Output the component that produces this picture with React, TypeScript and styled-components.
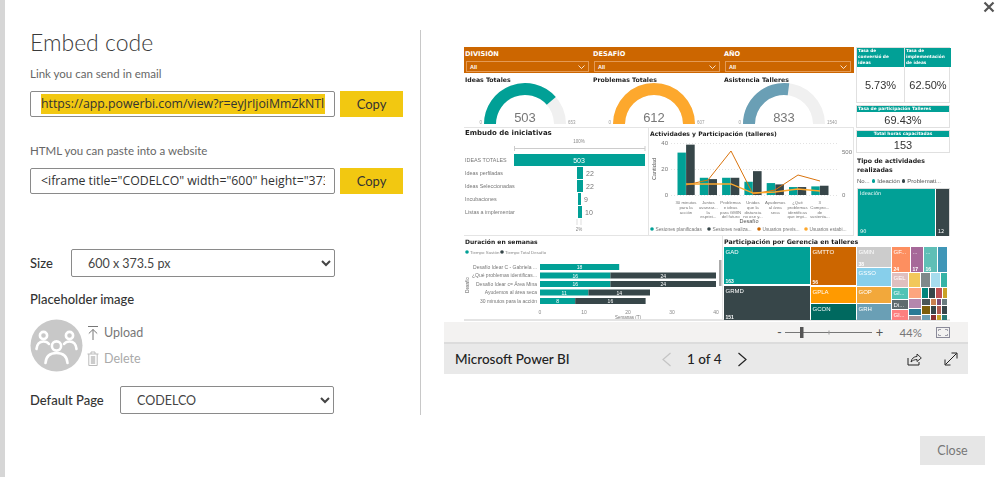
import React from 'react';
import styled, { createGlobalStyle } from 'styled-components';

const COLORS = {
  teal: '#01a096',
  dark: '#374649',
  orange: '#cc6600',
  amber: '#fda82d',
  steel: '#6a9fb5',
  yellow: '#f2c811',
};

const GlobalStyle = createGlobalStyle`
  html, body {
    margin: 0;
    padding: 0;
    background: #fff;
    font-family: "Lato", "Open Sans", sans-serif;
    color: #333;
  }
  * { box-sizing: border-box; }
  svg { display: block; }
  svg text { font-family: "Liberation Sans", sans-serif; }
`;

const Page = styled.div`
  position: relative;
  width: 999px;
  height: 477px;
  overflow: hidden;
  display: flex;
  background: #fff;
  border-left: 5px solid #d6d6d6;
`;

const CloseX = styled.button`
  position: absolute;
  top: 1px;
  right: 4px;
  border: 0;
  padding: 0;
  background: none;
`;

const LeftPanel = styled.section`
  width: 416px;
  height: 385px;
  margin-top: 30px;
  padding-left: 25px;
  border-right: 1px solid #c8c8c8;
`;

const Title = styled.h1`
  margin: 0;
  font-size: 23px;
  line-height: 24px;
  font-weight: 300;
  color: #3a3a3a;
`;

const FieldLabel = styled.div<{ $top: number }>`
  margin-top: ${(p) => p.$top}px;
  font-size: 11.5px;
  line-height: 14px;
  color: #666;
`;

const FieldRow = styled.div`
  display: flex;
  gap: 5px;
  margin-top: 10px;
`;

const CodeField = styled.div`
  width: 305px;
  height: 26px;
  padding: 2px 9px 0 10px;
  border: 1px solid #8a8a8a;
  border-radius: 2px;
  overflow: hidden;
  white-space: nowrap;
  font: 500 12.3px/20px "Open Sans", sans-serif;
  color: #333;
`;

const Highlight = styled.span`
  display: block;
  overflow: hidden;
  background: ${COLORS.yellow};
`;

const CodeClip = styled.span`
  display: block;
  overflow: hidden;
`;

const CopyButton = styled.button`
  width: 63px;
  height: 26px;
  border: 0;
  padding: 0;
  background: ${COLORS.yellow};
  font: 400 13px "Lato", sans-serif;
  color: #333;
`;

const InlineRow = styled.div<{ $top: number }>`
  display: flex;
  align-items: center;
  margin-top: ${(p) => p.$top}px;
`;

const InlineLabel = styled.label<{ $width: number }>`
  width: ${(p) => p.$width}px;
  font-size: 13px;
  font-weight: 500;
  color: #333;
`;

const Select = styled.select<{ $width: number }>`
  width: ${(p) => p.$width}px;
  height: 28px;
  padding-left: 12px;
  border: 1px solid #8a8a8a;
  border-radius: 2px;
  background: #fff;
  font: 400 12.5px "Lato", sans-serif;
  color: #444;
`;

const SubHead = styled.div`
  margin-top: 14px;
  font-size: 13px;
  line-height: 17px;
  font-weight: 500;
  color: #333;
`;

const PlaceholderRow = styled.div`
  display: flex;
  gap: 4px;
  margin-top: 11px;
`;

const Actions = styled.div`
  display: flex;
  flex-direction: column;
  gap: 9px;
  padding-top: 5px;
`;

const ActionLink = styled.span<{ $muted?: boolean }>`
  display: flex;
  align-items: center;
  gap: 5px;
  height: 17px;
  font-size: 12.5px;
  color: ${(p) => (p.$muted ? '#aaa' : '#777')};
`;

const RightPanel = styled.section`
  display: flex;
  flex-direction: column;
  margin-left: 23px;
  padding-top: 47px;
  width: 524px;
`;

const Report = styled.div`
  display: flex;
  flex-direction: column;
  width: 486px;
  margin-left: 20px;
  filter: blur(0.3px);
`;

const TopArea = styled.div`
  display: flex;
  gap: 2px;
  height: 189px;
`;

const MainColumn = styled.div`
  width: 390px;
  display: flex;
  flex-direction: column;
`;

const SlicerBand = styled.div`
  display: grid;
  grid-template-columns: 128px 131px 131px;
  height: 26px;
  background: ${COLORS.orange};
  color: #fff;
`;

const Slicer = styled.div`
  padding: 1px 3px 0 1px;
`;

const SlicerName = styled.div`
  font: 700 6.6px/12px "DejaVu Sans", sans-serif;
`;

const SlicerBox = styled.div`
  display: flex;
  justify-content: space-between;
  align-items: center;
  height: 11px;
  margin: 1px 0 0 1px;
  padding: 0 3px;
  border: 1px solid #e49a55;
  font: 700 5.5px "Liberation Sans", sans-serif;
`;

const GaugeRow = styled.div`
  display: grid;
  grid-template-columns: 128px 131px 131px;
  height: 54px;
`;

const GaugeTile = styled.div`
  position: relative;
`;

const TileTitle = styled.div<{ $size?: number }>`
  font: 700 ${(p) => p.$size ?? 7}px/9px "DejaVu Sans", sans-serif;
  color: #1c1c1c;
  white-space: nowrap;
`;

const GaugeTitle = styled(TileTitle)`
  position: absolute;
  top: 2px;
  left: 1px;
`;

const ChartRow = styled.div`
  display: grid;
  grid-template-columns: 185px 205px;
  height: 109px;
`;

const ChartTile = styled.div`
  border-top: 1px solid #e4e4e4;
  border-right: 1px solid #e4e4e4;
  border-bottom: 1px solid #e4e4e4;
`;

const SideColumn = styled.div`
  width: 94px;
  display: flex;
  flex-direction: column;
  gap: 2px;
`;

const KpiPair = styled.div`
  display: grid;
  grid-template-columns: 47px 47px;
  height: 56px;
  border: 1px solid #e0e0e0;
`;

const KpiCell = styled.div`
  display: flex;
  flex-direction: column;
  & + & {
    border-left: 1px solid #e0e0e0;
  }
`;

const KpiHead = styled.div`
  height: 19px;
  padding: 0 1px;
  background: ${COLORS.teal};
  color: #fff;
  font: 700 4.3px/6.2px "DejaVu Sans", sans-serif;
`;

const KpiValue = styled.div`
  flex: 1;
  display: flex;
  align-items: center;
  justify-content: center;
  font: 400 11px "Liberation Sans", sans-serif;
  color: #333;
`;

const KpiBand = styled.div`
  display: flex;
  flex-direction: column;
  height: 23px;
  border: 1px solid #e0e0e0;
`;

const BandHead = styled.div<{ $center?: boolean }>`
  height: 6px;
  padding: 0 1px;
  background: ${COLORS.teal};
  color: #fff;
  text-align: ${(p) => (p.$center ? 'center' : 'left')};
  font: 700 4.4px/6px "DejaVu Sans", sans-serif;
  white-space: nowrap;
`;

const ActivityTile = styled.div`
  flex: 1;
  padding: 1px 0 0 1px;
`;

const ActivityTitle = styled(TileTitle)`
  white-space: normal;
  font-size: 6.2px;
`;

const LegendLine = styled.div`
  display: flex;
  align-items: center;
  gap: 2px;
  margin-top: 3px;
  font: 400 6px/8px "Liberation Sans", sans-serif;
  color: #555;
  white-space: nowrap;
`;

const Dot = styled.i<{ $color: string }>`
  width: 3.5px;
  height: 3.5px;
  border-radius: 50%;
  background: ${(p) => p.$color};
`;

const ActivityBlocks = styled.div`
  display: flex;
  gap: 1px;
  height: 48px;
  margin-top: 3px;
  border: 1px solid #ddd;
  border-width: 1px 1px 0;
`;

const ActivityBlock = styled.div<{ $color: string; $grow: number }>`
  flex: ${(p) => p.$grow};
  display: flex;
  flex-direction: column;
  justify-content: space-between;
  padding: 1px 2px;
  background: ${(p) => p.$color};
  color: #fff;
  font: 400 5px/7px "DejaVu Sans", sans-serif;
`;

const BottomArea = styled.div`
  display: grid;
  grid-template-columns: 259px 227px;
  height: 85px;
  border-bottom: 2px solid #e4e4e4;
`;

const BottomTile = styled.div`
  border-right: 1px solid #e4e4e4;
`;

const ZoomBar = styled.div`
  display: flex;
  align-items: center;
  justify-content: flex-end;
  height: 20px;
  margin-top: 1px;
  padding-right: 18px;
  background: #f3f2f1;
  border-bottom: 0;
`;

const ZoomSign = styled.span`
  width: 12px;
  text-align: center;
  font-size: 13px;
  color: #555;
`;

const ZoomValue = styled.span`
  margin: 0 14px 0 14px;
  font-size: 11.5px;
  color: #777;
`;

const FooterBar = styled.div`
  display: grid;
  grid-template-columns: 206px 1fr auto;
  align-items: center;
  height: 32px;
  padding: 0 10px 0 11px;
  background: #e9e9e9;
  border-top: 2px solid #dcdcdc;
`;

const Brand = styled.span`
  font-size: 13.5px;
  font-weight: 500;
  color: #222;
`;

const Pager = styled.div`
  display: flex;
  align-items: center;
  gap: 15px;
  font-size: 13.5px;
  font-weight: 500;
  color: #222;
`;

const FooterIcons = styled.div`
  display: flex;
  gap: 22px;
`;

const CloseButton = styled.button`
  position: absolute;
  right: 14px;
  bottom: 12px;
  width: 65px;
  height: 29px;
  border: 0;
  padding: 0;
  background: #e6e6e6;
  font: 400 12.5px "Lato", sans-serif;
  color: #777;
`;

const arc = (cx: number, cy: number, R: number, r: number, frac: number) => {
  const a = Math.PI * (1 - Math.min(frac, 1));
  const x1 = cx + R * Math.cos(a);
  const y1 = cy - R * Math.sin(a);
  const x2 = cx + r * Math.cos(a);
  const y2 = cy - r * Math.sin(a);
  return `M${cx - R} ${cy}A${R} ${R} 0 0 1 ${x1} ${y1}L${x2} ${y2}A${r} ${r} 0 0 0 ${cx - r} ${cy}Z`;
};

const gauges = [
  { title: 'Ideas Totales', value: 503, max: 653, color: COLORS.teal, cx: 61 },
  { title: 'Problemas Totales', value: 612, max: 607, color: COLORS.amber, cx: 62 },
  { title: 'Asistencia Talleres', value: 833, max: 1540, color: COLORS.steel, cx: 61 },
];

const Gauge = ({ title, value, max, color, cx }: (typeof gauges)[number]) => (
  <GaugeTile>
    <GaugeTitle $size={6.2}>{title}</GaugeTitle>
    <svg width="128" height="54" style={{ overflow: 'visible' }}>
      <path d={arc(cx, 51, 41, 29, 1)} fill="#f0f0f0" />
      <path d={arc(cx, 51, 41, 29, value / max)} fill={color} />
      <text x={cx} y={49} textAnchor="middle" fontSize="13" fill="#777">{value}</text>
      <text x={cx - 43} y={51} textAnchor="end" fontSize="4.5" fill="#999">0</text>
      <text x={cx + 43} y={51} fontSize="4.5" fill="#999">{max}</text>
    </svg>
  </GaugeTile>
);

const funnelRows = [
  { label: 'IDEAS TOTALES', value: 503, x: 50, w: 131 },
  { label: 'Ideas perfiladas', value: 22, x: 113, w: 6 },
  { label: 'Ideas Seleccionadas', value: 22, x: 113, w: 6 },
  { label: 'Incubaciones', value: 9, x: 114, w: 3 },
  { label: 'Listas a implementar', value: 10, x: 114, w: 4 },
];

const FunnelChart = () => (
  <svg width="184" height="107">
    <foreignObject x="1" y="1" width="150" height="10">
      <TileTitle>Embudo de iniciativas</TileTitle>
    </foreignObject>
    <text x="115" y="15" textAnchor="middle" fontSize="4.5" fill="#888">100%</text>
    <path d="M50.5 18v5M50.5 20.5H181M181 18v5" stroke="#ccc" fill="none" />
    {funnelRows.map((row, i) => (
      <g key={row.label}>
        <text x="1" y={33.5 + i * 13} fontSize="5.4" fill="#777">{row.label}</text>
        <rect x={row.x} y={26 + i * 13} width={row.w} height="12" fill={COLORS.teal} />
        {i === 0 ? (
          <text x="115" y="34.5" textAnchor="middle" fontSize="7" fill="#fff">{row.value}</text>
        ) : (
          <text x={row.x + row.w + 3} y={34.5 + i * 13} fontSize="7" fill="#777">{row.value}</text>
        )}
      </g>
    ))}
    <path d="M113 91v6M117 91v6" stroke="#ddd" fill="none" />
    <text x="115" y="103" textAnchor="middle" fontSize="4.5" fill="#888">2%</text>
  </svg>
);

const activityGroups = [
  { teal: 32, dark: 38, label: ['30 minutos', 'para la', 'acción'] },
  { teal: 13, dark: 12, label: ['Juntos', 'avanzar...', 'la', 'espriei...'] },
  { teal: 13, dark: 13, label: ['Problemas', 'e ideas', 'para GMIN', 'del futuro'] },
  { teal: 10, dark: 18, label: ['Unidos', 'que la', 'distancia', 'no ose y...'] },
  { teal: 9, dark: 8, label: ['Ayudemos', 'al área', 'seca'] },
  { teal: 6, dark: 6, label: ['¿Qué', 'problemas', 'identificas', 'que impi...'] },
  { teal: 6.5, dark: 7, label: ['3', 'Compro...', 'de', 'sustenta...'] },
];

const plannedLine = [[37, 42], [59, 37], [82, 8], [104, 51], [126, 47], [149, 32], [171, 38]];
const attendedLine = [[37, 41], [59, 41], [82, 41], [104, 50], [126, 49], [149, 46], [171, 48]];
const toPoints = (line: number[][]) => line.map(([x, y]) => `${x},${y + 15}`).join(' ');

const activityLegend = [
  { x: 3, color: COLORS.teal, text: 'Sesiones planificadas' },
  { x: 60, color: COLORS.dark, text: 'Sesiones realiza...' },
  { x: 110, color: COLORS.orange, text: 'Usuarios previs...' },
  { x: 157, color: COLORS.amber, text: 'Usuarios estabi...' },
];

const ActivityChart = () => (
  <svg width="204" height="107">
    <foreignObject x="1" y="1" width="190" height="10">
      <TileTitle $size={6.1}>Actividades y Participación (talleres)</TileTitle>
    </foreignObject>
    <path d="M22 15.5H190M22 41.5H190" stroke="#e2e2e2" strokeDasharray="1 2" />
    <path d="M22 67.5H190" stroke="#e2e2e2" strokeDasharray="1 2" />
    <text x="19" y="17" textAnchor="end" fontSize="6" fill="#777">40</text>
    <text x="19" y="43" textAnchor="end" fontSize="6" fill="#777">20</text>
    <text x="19" y="69" textAnchor="end" fontSize="6" fill="#777">0</text>
    <text x="193" y="26" fontSize="6" fill="#777">500</text>
    <text x="193" y="69" fontSize="6" fill="#777">0</text>
    <text transform="translate(7 41) rotate(-90)" textAnchor="middle" fontSize="5.5" fill="#555">Cantidad</text>
    {activityGroups.map((g, i) => {
      const x = 28.5 + i * 22.3;
      return (
        <g key={g.label.join()}>
          <rect x={x} y={67 - g.teal * 1.325} width="8.4" height={g.teal * 1.325} fill={COLORS.teal} />
          <rect x={x + 8.6} y={67 - g.dark * 1.325} width="8.6" height={g.dark * 1.325} fill={COLORS.dark} />
          {g.label.map((line, j) => (
            <text key={j} x={x + 8.5} y={76 + j * 4.8} textAnchor="middle" fontSize="4.3" fill="#777">{line}</text>
          ))}
        </g>
      );
    })}
    <polyline points={toPoints(plannedLine)} fill="none" stroke="#d9730d" strokeWidth="1" />
    <polyline points={toPoints(attendedLine)} fill="none" stroke={COLORS.amber} strokeWidth="1.3" />
    <text x="100" y="95" textAnchor="middle" fontSize="5.5" fill="#555">Desafío</text>
    {activityLegend.map((item) => (
      <g key={item.text}>
        <circle cx={item.x} cy="101" r="1.8" fill={item.color} />
        <text x={item.x + 3.5} y="103" fontSize="4.8" fill="#777">{item.text}</text>
      </g>
    ))}
  </svg>
);

const durationRows = [
  { label: 'Desafío Idear C - Gabriela ...', a: 18, b: 0 },
  { label: '¿Qué problemas identificas...', a: 16, b: 24 },
  { label: 'Desafío Idear c= Área Mina', a: 16, b: 24 },
  { label: 'Ayudemos al área seca', a: 11, b: 14 },
  { label: '30 minutos para la acción', a: 8, b: 16 },
];

const DurationChart = () => (
  <svg width="258" height="83">
    <foreignObject x="1" y="1" width="200" height="10">
      <TileTitle $size={6}>Duración en semanas</TileTitle>
    </foreignObject>
    <circle cx="3" cy="16" r="1.8" fill={COLORS.teal} />
    <text x="6" y="18" fontSize="4.4" fill="#888">Tiempo Sustón</text>
    <circle cx="38" cy="16" r="1.8" fill={COLORS.dark} />
    <text x="41" y="18" fontSize="4.4" fill="#888">Tiempo Total Desafío</text>
    <text transform="translate(5 49) rotate(-90)" textAnchor="middle" fontSize="4.5" fill="#555">Desafío</text>
    {[0, 10, 20, 30, 40].map((tick) => (
      <text key={tick} x={76 + tick * 4.4} y="78" textAnchor="middle" fontSize="5" fill="#888">{tick}</text>
    ))}
    <text x="164" y="83" textAnchor="middle" fontSize="4.5" fill="#777">Semanas (T)</text>
    {durationRows.map((row, i) => {
      const y = 28 + i * 8.5;
      return (
        <g key={row.label}>
          <text x="73" y={y + 4.8} textAnchor="end" fontSize="5" fill="#777">{row.label}</text>
          <rect x="76" y={y} width={row.a * 4.4} height="6" fill={COLORS.teal} />
          <rect x={76 + row.a * 4.4} y={y} width={row.b * 4.4} height="6" fill={COLORS.dark} />
          <text x={76 + (row.a * 4.4) / 2} y={y + 5} textAnchor="middle" fontSize="5" fill="#fff">{row.a}</text>
          {row.b > 0 && (
            <text x={76 + (row.a + row.b / 2) * 4.4} y={y + 5} textAnchor="middle" fontSize="5" fill="#fff">{row.b}</text>
          )}
        </g>
      );
    })}
    <rect x="255" y="24" width="2.5" height="26" fill="#aaa" />
  </svg>
);

// x0, y0, x1, y1 in report pixels, relative to the top left of the tile
const treeCells: [number, number, number, number, string, string?, string?][] = [
  [1, 11, 87, 48, COLORS.teal, 'GAD', '163'],
  [1, 50, 87, 84, COLORS.dark, 'GRMD', '151'],
  [88, 11, 133, 49, COLORS.orange, 'GMTTO', '56'],
  [88, 51, 133, 67, '#ff9a00', 'GPLA'],
  [88, 68, 133, 84, '#00695f', 'GCON'],
  [134, 11, 168, 31, '#cccccc', 'GMIN', '38'],
  [134, 32, 168, 50, '#87cfeb', 'GSSO'],
  [134, 51, 168, 67, '#f2a83b', 'GOP'],
  [134, 68, 168, 84, '#6a9fb5', 'GRH'],
  [169, 11, 187, 36, '#fd8f60', 'GF...', '24'],
  [188, 11, 200, 36, '#a66999', '...', '17'],
  [201, 11, 214, 36, '#5fbfb6', '...', '16'],
  [215, 11, 224, 36, '#3f96b7'],
  [169, 37, 185, 51, '#dfbfbf', 'GEL'],
  [186, 37, 197, 51, '#f2c85a'],
  [198, 37, 207, 51, '#7f898a'],
  [208, 37, 217, 51, '#a6dced'],
  [218, 37, 224, 51, '#35b3a6'],
  [169, 52, 185, 63, '#4fc3b5', 'Gl...'],
  [169, 64, 185, 73, '#5f6b6d', 'Di...'],
  [169, 74, 185, 84, '#fd7f7f', 'Gl...'],
  [186, 52, 198, 62, '#fda57f'],
  [199, 52, 205, 62, '#01857c'],
  [206, 52, 212, 62, '#374649'],
  [213, 52, 219, 62, '#bf4f51'],
  [220, 52, 224, 62, '#c9a227'],
  [186, 63, 198, 72, '#b587ad'],
  [199, 63, 207, 69, '#4b5759'],
  [208, 63, 213, 69, '#c98050'],
  [214, 63, 218, 69, '#7a4b75'],
  [219, 63, 224, 69, '#6a7d80'],
  [186, 73, 198, 79, '#2a7a96'],
  [199, 70, 207, 78, '#7e5e0a'],
  [208, 70, 213, 78, '#374649'],
  [214, 70, 218, 78, '#b05a50'],
  [219, 70, 224, 78, '#374649'],
  [186, 80, 198, 84, '#a88f96'],
  [199, 79, 207, 84, '#6a9fb5'],
  [208, 79, 213, 84, '#8a3030'],
  [214, 79, 218, 84, '#c9a227'],
  [219, 79, 224, 84, '#2a7a76'],
];

const Treemap = () => (
  <svg width="226" height="84">
    <foreignObject x="1" y="1" width="220" height="10">
      <TileTitle $size={6.3}>Participación por Gerencia en talleres</TileTitle>
    </foreignObject>
    {treeCells.map(([x0, y0, x1, y1, fill, name, count]) => (
      <g key={`${x0}-${y0}`}>
        <rect x={x0} y={y0} width={x1 - x0} height={y1 - y0} fill={fill} />
        {name && <text x={x0 + 1.5} y={y0 + 7} fontSize="6" fill="#fff">{name}</text>}
        {count && <text x={x0 + 1.5} y={y1 - 1.5} fontSize="5" fontWeight="700" fill="#fff">{count}</text>}
      </g>
    ))}
  </svg>
);

const CloseGlyph = () => (
  <svg width="12" height="12" viewBox="0 0 12 12">
    <path d="M1.5 1.5l9 9M10.5 1.5l-9 9" stroke="#555" strokeWidth="2.2" />
  </svg>
);

const GroupPlaceholder = () => (
  <svg width="53" height="53" viewBox="0 0 53 53">
    <circle cx="26.5" cy="26.5" r="26" fill="#c8c8c8" />
    <g fill="none" stroke="#fff" strokeWidth="2.6" strokeLinecap="round">
      <circle cx="13.5" cy="16.5" r="3.6" />
      <circle cx="39.5" cy="16.5" r="3.6" />
      <circle cx="26.5" cy="27" r="4.6" />
      <path d="M6.5 30c.5-5 3-7.5 7-7.5 2.5 0 4.2.8 5.5 2.5" />
      <path d="M46.5 30c-.5-5-3-7.5-7-7.5-2.5 0-4.2.8-5.5 2.5" />
      <path d="M15.5 44c.5-6.500 4.500-10 11-10s10.500 3.500 11 10" />
    </g>
  </svg>
);

const UploadGlyph = () => (
  <svg width="12" height="16" viewBox="0 0 12 16">
    <path d="M1 1.500h10M6 15V4.500M1.800 8.500L6 4.500l4.200 4" fill="none" stroke="#777" strokeWidth="1" />
  </svg>
);

const TrashGlyph = () => (
  <svg width="12" height="15" viewBox="0 0 12 15">
    <path d="M.500 3h11M4 3V1h4v2M1.800 3v11.500h8.400V3" fill="none" stroke="#bbb" strokeWidth="1" />
    <rect x="3.800" y="5" width="4.400" height="8" fill="#ccc" />
  </svg>
);

const FitGlyph = () => (
  <svg width="14" height="11" viewBox="0 0 14 11">
    <rect x=".5" y=".5" width="13" height="10" fill="none" stroke="#8a8a99" />
    <path d="M2.500 4V2.500H5M9 2.500h2.500V4M11.500 7v1.500H9M5 8.500H2.500V7" fill="none" stroke="#8a8a99" strokeWidth=".8" />
  </svg>
);

const ZoomSlider = () => (
  <svg width="88" height="11">
    <path d="M0 5.500H87" stroke="#777" />
    <rect x="15" y="0" width="3.500" height="11" fill="#555" />
    <path d="M44 3.500v4" stroke="#999" />
  </svg>
);

const Chevron = ({ flip, color }: { flip?: boolean; color: string }) => (
  <svg width="11" height="15" viewBox="0 0 11 15">
    <path d={flip ? 'M9.500 1L2 7.500 9.500 14' : 'M1.500 1L9 7.500 1.500 14'} fill="none" stroke={color} strokeWidth="1.200" />
  </svg>
);

const ShareGlyph = () => (
  <svg width="15" height="14" viewBox="0 0 15 14">
    <path d="M1 6v7h11V10" fill="none" stroke="#222" />
    <path d="M4 10c.5-3.500 3-5.500 6-5.500V2l4.300 4-4.300 3.500V7.500c-2.500 0-4.500 1-6 2.500z" fill="none" stroke="#222" strokeWidth=".9" />
  </svg>
);

const ExpandGlyph = () => (
  <svg width="14" height="14" viewBox="0 0 14 14">
    <path d="M1.500 12.500L12.500 1.500M1 7.500v5.500h5.500M7.500 1H13v5.500" fill="none" stroke="#222" strokeWidth="1" />
  </svg>
);

const SmallCaret = () => (
  <svg width="7" height="4" viewBox="0 0 7 4">
    <path d="M.5.500l3 3 3-3" fill="none" stroke="#fff" strokeWidth=".8" />
  </svg>
);

const App = () => (
  <Page>
    <GlobalStyle />
    <CloseX aria-label="Close">
      <CloseGlyph />
    </CloseX>

    <LeftPanel>
      <Title>Embed code</Title>
      <FieldLabel $top={13}>Link you can send in email</FieldLabel>
      <FieldRow>
        <CodeField>
          <Highlight>https://app.powerbi.com/view?r=eyJrIjoiMmZkNTlmNGQtYjQ</Highlight>
        </CodeField>
        <CopyButton>Copy</CopyButton>
      </FieldRow>
      <FieldLabel $top={27}>HTML you can paste into a website</FieldLabel>
      <FieldRow>
        <CodeField>
          <CodeClip>&lt;iframe title="CODELCO" width="600" height="373.5" src=</CodeClip>
        </CodeField>
        <CopyButton>Copy</CopyButton>
      </FieldRow>

      <InlineRow $top={55}>
        <InlineLabel $width={41}>Size</InlineLabel>
        <Select $width={264} defaultValue="600 x 373.5 px">
          <option>600 x 373.5 px</option>
        </Select>
      </InlineRow>
      <SubHead>Placeholder image</SubHead>
      <PlaceholderRow>
        <GroupPlaceholder />
        <Actions>
          <ActionLink><UploadGlyph /> Upload</ActionLink>
          <ActionLink $muted><TrashGlyph /> Delete</ActionLink>
        </Actions>
      </PlaceholderRow>
      <InlineRow $top={14}>
        <InlineLabel $width={90}>Default Page</InlineLabel>
        <Select $width={214} defaultValue="CODELCO">
          <option>CODELCO</option>
        </Select>
      </InlineRow>
    </LeftPanel>

    <RightPanel>
      <Report>
        <TopArea>
          <MainColumn>
            <SlicerBand>
              {['DIVISIÓN', 'DESAFÍO', 'AÑO'].map((name) => (
                <Slicer key={name}>
                  <SlicerName>{name}</SlicerName>
                  <SlicerBox>All <SmallCaret /></SlicerBox>
                </Slicer>
              ))}
            </SlicerBand>
            <GaugeRow>
              {gauges.map((g) => (
                <Gauge key={g.title} {...g} />
              ))}
            </GaugeRow>
            <ChartRow>
              <ChartTile><FunnelChart /></ChartTile>
              <ChartTile><ActivityChart /></ChartTile>
            </ChartRow>
          </MainColumn>
          <SideColumn>
            <KpiPair>
              <KpiCell>
                <KpiHead>Tasa de<br />conversió de<br />ideas</KpiHead>
                <KpiValue>5.73%</KpiValue>
              </KpiCell>
              <KpiCell>
                <KpiHead>Tasa de<br />implementación<br />de ideas</KpiHead>
                <KpiValue>62.50%</KpiValue>
              </KpiCell>
            </KpiPair>
            <KpiBand>
              <BandHead>Tasa de participación Talleres</BandHead>
              <KpiValue>69.43%</KpiValue>
            </KpiBand>
            <KpiBand>
              <BandHead $center>Total horas capacitadas</BandHead>
              <KpiValue>153</KpiValue>
            </KpiBand>
            <ActivityTile>
              <ActivityTitle>Tipo de actividades<br />realizadas</ActivityTitle>
              <LegendLine>
                No... <Dot $color={COLORS.teal} /> Ideación <Dot $color={COLORS.dark} /> Problemati...
              </LegendLine>
              <ActivityBlocks>
                <ActivityBlock $color={COLORS.teal} $grow={80}>
                  <span>Ideación</span>
                  <span>90</span>
                </ActivityBlock>
                <ActivityBlock $color={COLORS.dark} $grow={10}>
                  <span />
                  <span>12</span>
                </ActivityBlock>
              </ActivityBlocks>
            </ActivityTile>
          </SideColumn>
        </TopArea>
        <BottomArea>
          <BottomTile><DurationChart /></BottomTile>
          <Treemap />
        </BottomArea>
      </Report>

      <ZoomBar>
        <ZoomSign>-</ZoomSign>
        <ZoomSlider />
        <ZoomSign>+</ZoomSign>
        <ZoomValue>44%</ZoomValue>
        <FitGlyph />
      </ZoomBar>
      <FooterBar>
        <Brand>Microsoft Power BI</Brand>
        <Pager>
          <Chevron flip color="#c4c4c4" />
          1 of 4
          <Chevron color="#222" />
        </Pager>
        <FooterIcons>
          <ShareGlyph />
          <ExpandGlyph />
        </FooterIcons>
      </FooterBar>
    </RightPanel>

    <CloseButton>Close</CloseButton>
  </Page>
);

export default App;
